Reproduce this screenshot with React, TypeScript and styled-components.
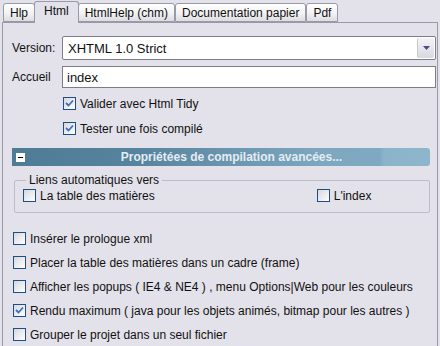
import React from "react";
import styled, { createGlobalStyle } from "styled-components";

const Global = createGlobalStyle`
  html, body { margin: 0; padding: 0; background: #e3e2ea; }
  body { font-family: Tahoma, "Liberation Sans", Arial, sans-serif; font-size: 12px; color: #111; }
`;

const Page = styled.div`
  width: 440px;
  height: 346px;
  overflow: hidden;
  padding: 0 2px 0 2px;
  box-sizing: border-box;
  display: flex;
  flex-direction: column;
`;

const TabBar = styled.div`
  display: flex;
  align-items: flex-end;
  height: 22px;
  padding-left: 1px;
  position: relative;
  z-index: 1;
`;

const Tab = styled.div<{ $active?: boolean }>`
  height: ${(p) => (p.$active ? "22px" : "19px")};
  box-sizing: border-box;
  padding: 0 ${(p) => (p.$active ? "9px" : "6px")};
  margin: ${(p) => (p.$active ? "0 -1px -1px -1px" : "0")};
  border: 1px solid #9a9aa6;
  border-bottom: ${(p) => (p.$active ? "none" : "1px solid #9a9aa6")};
  border-radius: 3px 3px 0 0;
  background: ${(p) =>
    p.$active
      ? "#e3e2ea"
      : "linear-gradient(#ffffff 0%, #f2f2f4 55%, #dcdce2 100%)"};
  display: flex;
  align-items: center;
  padding-top: ${(p) => (p.$active ? "0" : "1px")};
  padding-bottom: ${(p) => (p.$active ? "4px" : "0")};
  white-space: nowrap;
  z-index: ${(p) => (p.$active ? 2 : 0)};
`;

const Panel = styled.div`
  flex: 1;
  border: 1px solid #9a9aa6;
  border-bottom: none;
  padding: 0 0 0 9px;
  box-sizing: border-box;
  display: flex;
  flex-direction: column;
`;

const FieldRow = styled.div<{ $top: number; $h: number }>`
  display: flex;
  align-items: center;
  margin-top: ${(p) => p.$top}px;
  height: ${(p) => p.$h}px;
`;

const Label = styled.span`
  width: 50px;
  flex: none;
`;

const Combo = styled.div`
  width: 374px;
  height: 24px;
  box-sizing: border-box;
  border: 1px solid #7d7d89;
  border-radius: 2px;
  background: #fff;
  display: flex;
  align-items: stretch;
  font-size: 13px;
`;

const ComboText = styled.span`
  flex: 1;
  display: flex;
  align-items: center;
  padding-left: 5px;
`;

const ComboButton = styled.span`
  width: 16px;
  margin: 1px;
  border-radius: 2px;
  background: linear-gradient(#f4f4f7, #d8d8e0);
  border-left: 1px solid #c8c8d2;
  display: flex;
  align-items: center;
  justify-content: center;
`;

const TextInput = styled.div`
  width: 374px;
  height: 22px;
  box-sizing: border-box;
  border: 1px solid #7d7d89;
  background: #fff;
  display: flex;
  align-items: center;
  padding-left: 4px;
  font-size: 13px;
`;

const CheckLine = styled.label<{ $top: number; $left?: number }>`
  display: flex;
  align-items: center;
  gap: 4px;
  height: 15px;
  margin-top: ${(p) => p.$top}px;
  margin-left: ${(p) => p.$left ?? 0}px;
  white-space: nowrap;
`;

const Box = styled.span`
  width: 13px;
  height: 13px;
  box-sizing: border-box;
  border: 1px solid #1c4f86;
  background: linear-gradient(135deg, #d8d8dc 0%, #f3f3f5 70%, #ffffff 100%);
  display: inline-flex;
  align-items: center;
  justify-content: center;
  flex: none;
`;

const Bar = styled.div`
  margin-top: 12px;
  width: 418px;
  height: 18px;
  border-radius: 0 3px 3px 0;
  background: linear-gradient(
    90deg,
    #4e7b96 0%,
    #56839e 30%,
    #6a94ad 50%,
    #7ea8c0 75%,
    #7fa9c2 88%,
    #8bb4cb 89%,
    #8db6cc 100%
  );
  display: flex;
  align-items: center;
`;

const Minus = styled.span`
  width: 9px;
  height: 9px;
  background: #fff;
  margin-left: 4px;
  display: flex;
  align-items: center;
  justify-content: center;
  &::after {
    content: "";
    width: 5px;
    height: 1px;
    background: #000;
  }
`;

const BarTitle = styled.span`
  flex: 1;
  text-align: center;
  color: #e4ecf3;
  font-weight: bold;
  padding-left: 8px;
`;

const Group = styled.fieldset`
  margin: 8px 0 0 2px;
  width: 416px;
  box-sizing: border-box;
  border: 1px solid #bdbccb;
  border-radius: 2px;
  padding: 0 0 7px 8px;
  height: 39px;
  display: flex;
  align-items: flex-start;
`;

const Legend = styled.legend`
  padding: 0 3px;
  margin-left: 3px;
  line-height: 13px;
`;

const GroupRow = styled.div`
  display: flex;
  width: 100%;
  margin-top: 1px;
`;

const List = styled.div`
  display: flex;
  flex-direction: column;
  margin-top: 18px;
  gap: 9px;
`;

const Check = ({ checked }: { checked?: boolean }) => (
  <Box>
    {checked && (
      <svg width="9" height="9" viewBox="0 0 9 9">
        <path d="M1 4 L3.5 6.5 L8 1.5" fill="none" stroke="#3c6fc2" strokeWidth="1.8" />
      </svg>
    )}
  </Box>
);

export default function App() {
  const tabs = ["Hlp", "Html", "HtmlHelp (chm)", "Documentation papier", "Pdf"];
  const options = [
    { t: "Insérer le prologue xml" },
    { t: "Placer la table des matières dans un cadre (frame)" },
    { t: "Afficher les popups ( IE4 & NE4 ) , menu Options|Web pour les couleurs" },
    { t: "Rendu maximum ( java pour les objets animés, bitmap pour les autres )", c: true },
    { t: "Grouper le projet dans un seul fichier" },
  ];
  return (
    <Page>
      <Global />
      <TabBar>
        {tabs.map((t) => (
          <Tab key={t} $active={t === "Html"}>
            {t}
          </Tab>
        ))}
      </TabBar>
      <Panel>
        <FieldRow $top={13} $h={24}>
          <Label>Version:</Label>
          <Combo>
            <ComboText>XHTML 1.0 Strict</ComboText>
            <ComboButton>
              <svg width="7" height="4" viewBox="0 0 7 4">
                <path d="M0 0 H7 L3.5 4 Z" fill="#4d4c8a" />
              </svg>
            </ComboButton>
          </Combo>
        </FieldRow>
        <FieldRow $top={6} $h={22}>
          <Label>Accueil</Label>
          <TextInput>index</TextInput>
        </FieldRow>
        <CheckLine $top={8} $left={51}>
          <Check checked />
          Valider avec Html Tidy
        </CheckLine>
        <CheckLine $top={10} $left={51}>
          <Check checked />
          Tester une fois compilé
        </CheckLine>
        <Bar>
          <Minus />
          <BarTitle>Propriétées de compilation avancées...</BarTitle>
        </Bar>
        <Group>
          <Legend>Liens automatiques vers</Legend>
          <GroupRow>
            <CheckLine $top={0}>
              <Check />
              La table des matières
            </CheckLine>
            <CheckLine $top={0} $left={162}>
              <Check />
              L'index
            </CheckLine>
          </GroupRow>
        </Group>
        <List>
          {options.map((o) => (
            <CheckLine key={o.t} $top={0} $left={1}>
              <Check checked={o.c} />
              {o.t}
            </CheckLine>
          ))}
        </List>
      </Panel>
    </Page>
  );
}
